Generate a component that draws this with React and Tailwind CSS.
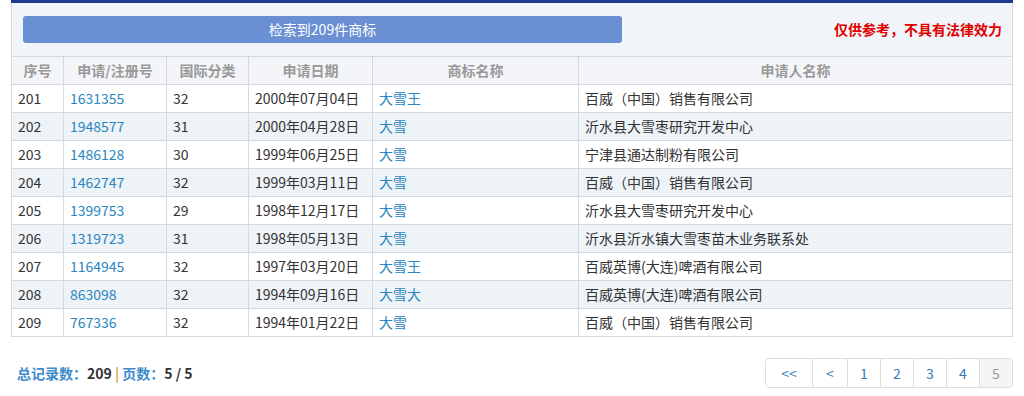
const rows = [
  ["201", "1631355", "32", "2000年07月04日", "大雪王", "百威（中国）销售有限公司"],
  ["202", "1948577", "31", "2000年04月28日", "大雪", "沂水县大雪枣研究开发中心"],
  ["203", "1486128", "30", "1999年06月25日", "大雪", "宁津县通达制粉有限公司"],
  ["204", "1462747", "32", "1999年03月11日", "大雪", "百威（中国）销售有限公司"],
  ["205", "1399753", "29", "1998年12月17日", "大雪", "沂水县大雪枣研究开发中心"],
  ["206", "1319723", "31", "1998年05月13日", "大雪", "沂水县沂水镇大雪枣苗木业务联系处"],
  ["207", "1164945", "32", "1997年03月20日", "大雪王", "百威英博(大连)啤酒有限公司"],
  ["208", "863098", "32", "1994年09月16日", "大雪大", "百威英博(大连)啤酒有限公司"],
  ["209", "767336", "32", "1994年01月22日", "大雪", "百威（中国）销售有限公司"],
];

const cols = ["w-[51px]", "w-[103px]", "w-[82px]", "w-[124px]", "w-[206px]", "flex-1"];
const heads = ["序号", "申请/注册号", "国际分类", "申请日期", "商标名称", "申请人名称"];

function Row({ cells, striped }) {
  return (
    <div className={`flex h-[28px] border-t border-[#d4d9df] ${striped ? "bg-[#eef3f8]" : "bg-white"}`}>
      {cells.map((c, i) => (
        <div
          key={i}
          className={`${cols[i]} flex items-center px-[6px] ${i > 0 ? "border-l border-[#d4d9df]" : ""} ${
            i === 1 || i === 4 ? "text-[#2a86c0]" : "text-[#333]"
          }`}
        >
          {c}
        </div>
      ))}
    </div>
  );
}

export default function App() {
  return (
    <div className="w-[1024px] h-[396px] bg-white text-[14px] font-['Noto_Sans_CJK_SC','Noto_Sans',sans-serif]">
      <div className="mx-[11px] w-[1002px]">
        <div className="h-[3px] bg-[#1b3c8e]" />
        <div className="border-x border-b border-[#d4d9df]">
          <div className="flex items-center justify-between h-[53px] pl-[11px] pr-[10px] bg-[#f1f4f8]">
            <div className="w-[599px] h-[27px] rounded-[3px] bg-[#6a8fd2] text-white flex items-center justify-center text-[14px]">
              检索到209件商标
            </div>
            <div className="text-[#e00000] font-bold text-[14px]">仅供参考，不具有法律效力</div>
          </div>
          <div className="flex h-[28px] border-t border-[#d4d9df] bg-[#f3f5f8] text-[#999] font-bold text-[14px]">
            {heads.map((h, i) => (
              <div
                key={i}
                className={`${cols[i]} flex items-center justify-center ${i > 0 ? "border-l border-[#d4d9df]" : ""}`}
              >
                {h}
              </div>
            ))}
          </div>
          {rows.map((r, i) => (
            <Row key={r[0]} cells={r} striped={i % 2 === 1} />
          ))}
        </div>
        <div className="flex items-center justify-between mt-[21px]">
          <div className="pl-[6px] text-[14px] font-bold">
            <span className="text-[#3d8bcb]">总记录数：</span>
            <span className="text-[#333]">209 </span>
            <span className="text-[#d8a94a]">|</span>
            <span className="text-[#3d8bcb]"> 页数：</span>
            <span className="text-[#333]">5 / 5</span>
          </div>
          <div className="flex h-[30px] border border-[#dddddd] rounded-[4px] overflow-hidden text-[#337ab7] text-[14px]">
            {["<<", "<", "1", "2", "3", "4"].map((p, i) => (
              <div
                key={p}
                className={`flex items-center justify-center ${i > 0 ? "border-l border-[#dddddd]" : ""} ${
                  i === 0 ? "w-[46px]" : i === 1 ? "w-[35px]" : "w-[33px]"
                }`}
              >
                {p}
              </div>
            ))}
            <div className="w-[33px] flex items-center justify-center border-l border-[#dddddd] bg-[#f5f5f5] text-[#999]">
              5
            </div>
          </div>
        </div>
      </div>
    </div>
  );
}
